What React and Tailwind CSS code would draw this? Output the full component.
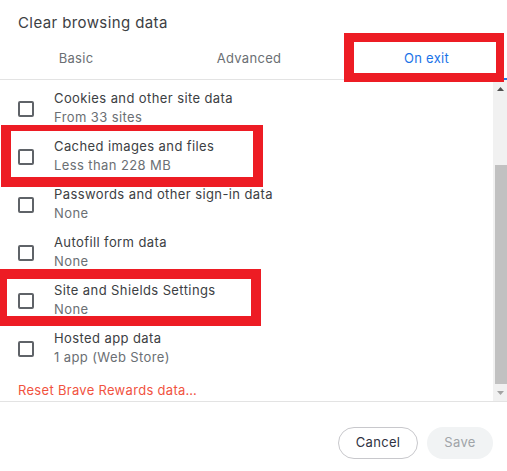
import React from "react";

const items = [
  { title: "Cookies and other site data", sub: "From 33 sites" },
  { title: "Cached images and files", sub: "Less than 228 MB" },
  { title: "Passwords and other sign-in data", sub: "None" },
  { title: "Autofill form data", sub: "None" },
  { title: "Site and Shields Settings", sub: "None" },
  { title: "Hosted app data", sub: "1 app (Web Store)" },
];

function Row({ title, sub }) {
  return (
    <div className="flex h-[48px] items-center">
      <div className="ml-[18px] mt-[2px] h-[16px] w-[16px] rounded-[2px] border-2 border-[#5f6368]" />
      <div className="ml-[20px] flex flex-col tracking-[0.4px]">
        <span className="text-[13px] leading-[19px] text-[#3c4043]">{title}</span>
        <span className="text-[13px] leading-[19px] text-[#6b6f74]">{sub}</span>
      </div>
    </div>
  );
}

export default function App() {
  return (
    <div
      className="relative h-[471px] w-[507px] overflow-hidden bg-white"
      style={{ fontFamily: "Inter, 'Noto Sans', sans-serif" }}
    >
      {/* Header */}
      <div className="px-[18px] pt-[13px] text-[15px] leading-[20px] tracking-[0.4px] text-[#3c4043]">Clear browsing data</div>

      {/* Tabs */}
      <div className="mt-[5px] grid h-[42px] grid-cols-[152px_194px_161px] border-b border-[#e3e3e3] text-[13px] tracking-[0.3px]">
        <div className="flex items-center justify-center text-[#6b6f74]">Basic</div>
        <div className="flex items-center justify-center text-[#6b6f74]">Advanced</div>
        <div className="relative flex items-center justify-center text-[#1a73e8]">
          On exit
          <div className="absolute bottom-[-1px] left-0 right-0 h-[2px] bg-[#1a73e8]" />
        </div>
      </div>

      {/* Scroll area */}
      <div className="flex h-[322px] border-b border-[#e3e3e3]">
        <div className="flex-1 pt-[4px]">
          {items.map((it) => (
            <Row key={it.title} {...it} />
          ))}
          <div className="ml-[18px] mt-[8px] text-[13px] leading-[20px] tracking-[0.3px] text-[#f1533f]">Reset Brave Rewards data…</div>
        </div>
        <div className="flex w-[14px] flex-col bg-[#f1f1f1]">
          <div className="flex h-[17px] items-center justify-center">
            <svg width="7" height="4" viewBox="0 0 7 4"><path d="M0 4 L3.5 0 L7 4 Z" fill="#505050" /></svg>
          </div>
          <div className="h-[68px]" />
          <div className="ml-[2px] h-[219px] bg-[#c1c1c1]" />
          <div className="flex flex-1 items-center justify-center">
            <svg width="7" height="4" viewBox="0 0 7 4"><path d="M0 0 L3.5 4 L7 0 Z" fill="#a3a3a3" /></svg>
          </div>
        </div>
      </div>

      {/* Footer */}
      <div className="flex justify-end gap-[9px] pr-[14px] pt-[25px] text-[13px] tracking-[0.3px]">
        <button className="h-[32px] w-[80px] rounded-full border border-[#c8c8cc] text-[#2f3242]">Cancel</button>
        <button className="h-[32px] w-[66px] rounded-full bg-[#f1f3f4] text-[#a0a4a8]">Save</button>
      </div>

      {/* Annotation boxes */}
      <div className="pointer-events-none absolute left-[344px] top-[33px] h-[49px] w-[160px] border-y-[9px] border-l-[10px] border-r-[8px] border-[#ed1c24]" />
      <div className="pointer-events-none absolute left-[1px] top-[125px] h-[62px] w-[262px] border-[10px] border-t-[6px] border-[#ed1c24]" />
      <div className="pointer-events-none absolute left-0 top-[269px] h-[57px] w-[261px] border-y-[10px] border-l-[7px] border-r-[10px] border-[#ed1c24]" />
    </div>
  );
}
